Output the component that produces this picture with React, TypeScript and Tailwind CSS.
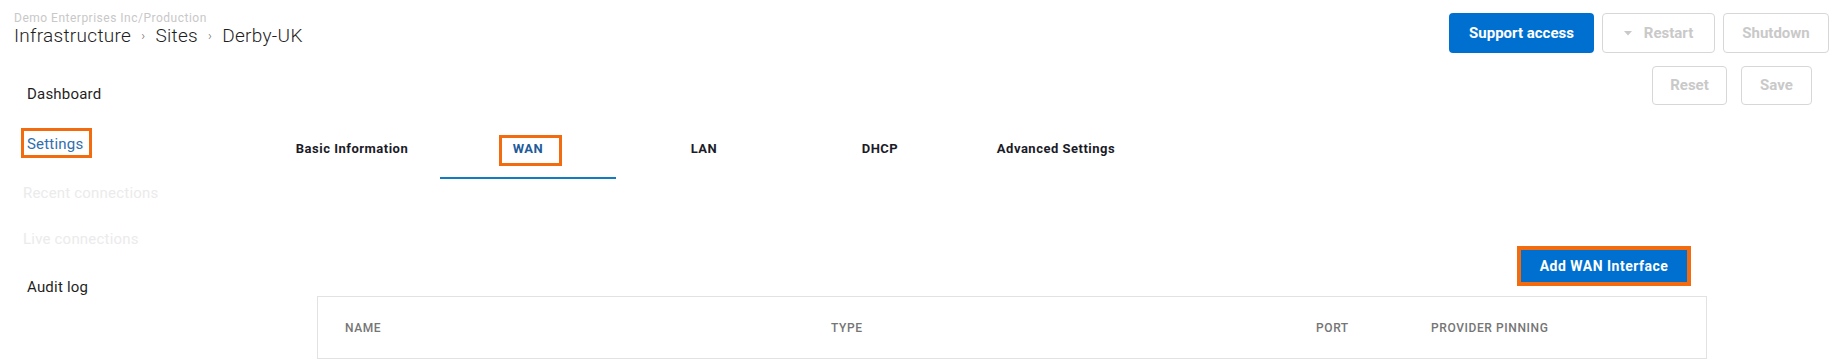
import React from "react";

// Site settings page: breadcrumb header, side nav, tabs and the WAN interfaces table.

const font = { fontFamily: "Roboto, 'Liberation Sans', sans-serif" };

const tabs = ["Basic Information", "WAN", "LAN", "DHCP", "Advanced Settings"];

const navItems = [
  { label: "Dashboard", h: "h-[50px]", cls: "text-[#1f1f1f]" },
  { label: "Settings", h: "h-[49px]", cls: "text-[#2f6fad]", marked: true },
  { label: "Recent connections", h: "h-[46px]", cls: "-ml-[4px] text-[#ebebeb]" },
  { label: "Live connections", h: "h-[48px]", cls: "-ml-[4px] text-[#ebebeb]" },
  { label: "Audit log", h: "h-[48px]", cls: "text-[#1f1f1f]" },
];

function Caret() {
  return (
    <svg width="8" height="5" viewBox="0 0 8 5" className="block">
      <path d="M0 0h8L4 4.5z" fill="#c9c9c9" />
    </svg>
  );
}

function GhostButton({ children, w, h = "h-[40px]" }: { children: React.ReactNode; w: string; h?: string }) {
  return (
    <button
      type="button"
      disabled
      className={`${w} ${h} flex items-center justify-center gap-[12px] rounded-[4px] border border-[#d7d7d7] bg-white text-[15px] font-bold text-[#c9c9c9]`}
    >
      {children}
    </button>
  );
}

export default function App() {
  return (
    <div className="h-[360px] w-[1835px] overflow-hidden bg-white" style={font}>
      {/* header */}
      <div className="flex h-[53px] justify-between">
        <div className="pl-[14px] pt-[10.5px]">
          <div className="text-[12px] leading-[14px] tracking-[0.5px] text-[#c8c8c8]">
            Demo Enterprises Inc/Production
          </div>
          <div className="flex items-center text-[19px] font-light leading-[22px] tracking-[0.3px] text-[#1e1e1e]">
            <span>Infrastructure</span>
            <span className="mx-[10px] text-[13px] text-[#666]">›</span>
            <span>Sites</span>
            <span className="mx-[10px] text-[13px] text-[#666]">›</span>
            <span>Derby-UK</span>
          </div>
        </div>
        <div className="flex gap-[8px] pr-[6px] pt-[13px]">
          <button
            type="button"
            className="h-[40px] w-[145px] rounded-[4px] bg-[#0070d0] text-[15px] font-bold text-white"
          >
            Support access
          </button>
          <GhostButton w="w-[113px]">
            <Caret />
            <span>Restart</span>
          </GhostButton>
          <GhostButton w="w-[106px]">Shutdown</GhostButton>
        </div>
      </div>

      {/* body */}
      <div className="flex">
        <nav className="w-[264px] shrink-0 pl-[27px] pt-[17px]">
          {navItems.map((item) => (
            <div
              key={item.label}
              className={`${item.h} text-[15px] leading-[48px] tracking-[0.2px] ${item.cls}`}
            >
              <span className="relative">
                {item.label}
                {item.marked && (
                  <span className="absolute -bottom-[5px] -left-[6px] -right-[9px] -top-[7px] border-[3px] border-[#f26b0f]" />
                )}
              </span>
            </div>
          ))}
        </nav>

        <main className="flex-1">
          <div className="mt-[13px] flex justify-end gap-[14px] pr-[23px]">
            <GhostButton w="w-[75px]" h="h-[39px]">Reset</GhostButton>
            <GhostButton w="w-[71px]" h="h-[39px]">Save</GhostButton>
          </div>

          <div className="mt-[15px] flex">
            {tabs.map((t) => {
              const active = t === "WAN";
              return (
                <div
                  key={t}
                  className={`w-[176px] border-b-2 pb-[18px] pt-[19px] text-center text-[13px] font-bold leading-[20px] tracking-[0.5px] ${
                    active ? "border-[#127cc1] text-[#1f5c9b]" : "border-transparent text-[#1b1b28]"
                  }`}
                >
                  <span className="relative">
                    {t}
                    {active && (
                      <span className="absolute -bottom-[10px] -left-[14px] -right-[19px] -top-[6px] border-[3px] border-[#f26b0f]" />
                    )}
                  </span>
                </div>
              );
            })}
          </div>

          <div className="ml-[53px] w-[1390px]">
            <div className="mt-[71px] flex justify-end pr-[20px]">
              <button
                type="button"
                className="h-[32px] w-[166px] bg-[#0070d0] text-[14px] font-bold tracking-[0.5px] text-white outline-[4px] outline-[#f26b0f] outline-solid"
              >
                Add WAN Interface
              </button>
            </div>

            <div className="mt-[14px] border border-[#e2e2e2]">
              <div className="grid h-[61px] grid-cols-[486px_485px_115px_1fr] items-center pl-[27px] text-[12px] font-medium uppercase tracking-[0.6px] text-[#757575]">
                <div>Name</div>
                <div>Type</div>
                <div>Port</div>
                <div>Provider Pinning</div>
              </div>
            </div>
          </div>
        </main>
      </div>
    </div>
  );
}
